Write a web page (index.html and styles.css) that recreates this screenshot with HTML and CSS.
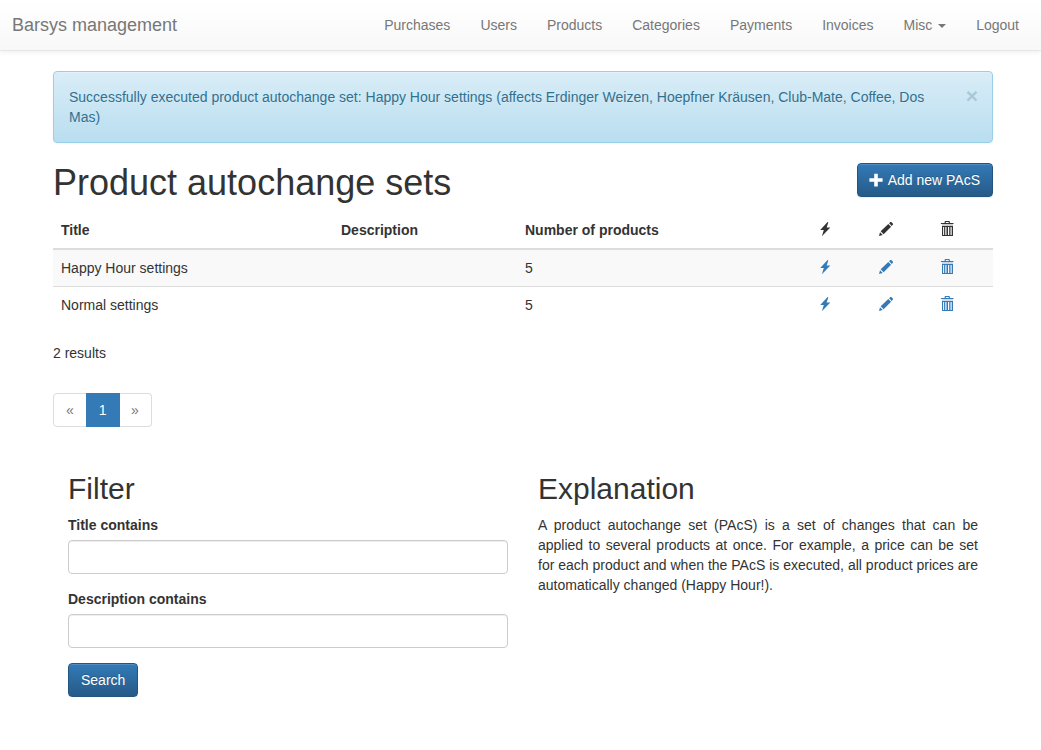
FILE: index.html
```html
<!DOCTYPE html>
<html lang="en">
<head>
<meta charset="utf-8">
<title>Barsys management</title>
<link rel="stylesheet" href="styles.css">
</head>
<body>
<svg class="defs" width="0" height="0" aria-hidden="true">
  <symbol id="bolt" viewBox="0 0 14 16"><path d="M9.6 1 2.2 9.1H5.8L3.9 15.3 12.3 6.6H8.6L10.3 1.4Z"/></symbol>
  <symbol id="pencil" viewBox="0 0 14 16"><path d="M0 15 1 11.2 3.7 14ZM1.7 10.3 9.3 2.9 12.1 5.7 4.6 13.3ZM10.1 2.2 11.3 1.1Q11.8.7 12.3 1.1L13.8 2.6Q14.2 3.2 13.8 3.7L12.8 4.9Z"/></symbol>
  <symbol id="trash" viewBox="0 0 14 16"><path fill-rule="evenodd" d="M4.6 2V1Q4.6 0 5.6 0H8.9Q9.9 0 9.9 1V2H13.1Q13.6 2 13.6 3V3.1H.8V3Q.8 2 1.3 2ZM5.8 2H8.7V1H5.8ZM2 5H13V14.4Q13 15 12.1 15H2.9Q2 15 2 14.4ZM3.1 6V14H4.1V6ZM5.3 6V14H6.5V6ZM8 6V14H9.2V6ZM10.5 6V14H11.7V6Z"/><path opacity=".25" d="M2 3H13V5H2Z"/></symbol>
</svg>
<nav class="navbar">
  <a class="brand">Barsys management</a>
  <ul class="nav">
    <li>Purchases</li><li>Users</li><li>Products</li><li>Categories</li><li>Payments</li><li>Invoices</li><li>Misc <span class="caret"></span></li><li>Logout</li>
  </ul>
</nav>
<main class="container">
  <div class="alert">
    <span>Successfully executed product autochange set: Happy Hour settings (affects Erdinger Weizen, Hoepfner Kräusen, Club-Mate, Coffee, Dos Mas)</span>
    <button class="close" type="button">×</button>
  </div>
  <header class="heading">
    <h1>Product autochange sets</h1>
    <a class="btn"><svg class="plus" viewBox="0 0 14 14"><path d="M5.2.8H8.8V5.2H13.6V8.8H8.8V13.4H5.2V8.8H.4V5.2H5.2Z"/></svg> Add new PAcS</a>
  </header>
  <table class="table">
    <colgroup><col class="col-title"><col class="col-desc"><col class="col-num"><col class="col-icon"><col class="col-icon"><col class="col-icon"></colgroup>
    <thead><tr><th>Title</th><th>Description</th><th>Number of products</th><th><svg class="icon"><use href="#bolt"/></svg></th><th><svg class="icon"><use href="#pencil"/></svg></th><th><svg class="icon"><use href="#trash"/></svg></th></tr></thead>
    <tbody>
      <tr><td>Happy Hour settings</td><td></td><td>5</td><td><svg class="icon"><use href="#bolt"/></svg></td><td><svg class="icon"><use href="#pencil"/></svg></td><td><svg class="icon"><use href="#trash"/></svg></td></tr>
      <tr><td>Normal settings</td><td></td><td>5</td><td><svg class="icon"><use href="#bolt"/></svg></td><td><svg class="icon"><use href="#pencil"/></svg></td><td><svg class="icon"><use href="#trash"/></svg></td></tr>
    </tbody>
  </table>
  <p class="results">2 results</p>
  <ul class="pagination"><li>«</li><li class="active">1</li><li>»</li></ul>
  <div class="row">
    <form class="column">
      <h2>Filter</h2>
      <label for="title">Title contains</label>
      <input id="title" type="text">
      <label for="desc">Description contains</label>
      <input id="desc" type="text">
      <button class="btn" type="button">Search</button>
    </form>
    <section class="column">
      <h2>Explanation</h2>
      <p class="explain">A product autochange set (PAcS) is a set of changes that can be applied to several products at once. For example, a price can be set for each product and when the PAcS is executed, all product prices are automatically changed (Happy Hour!).</p>
    </section>
  </div>
</main>
</body>
</html>
```
FILE: styles.css
```css
* { box-sizing: border-box; }
body {
  margin: 0;
  font: 14px/20px "Liberation Sans", Arial, sans-serif;
  color: #333;
  background: #fff;
}
.defs { display: none; }
.navbar {
  display: flex;
  justify-content: space-between;
  height: 51px;
  padding: 0 7px 0 12px;
  background: linear-gradient(#fff, #f8f8f8);
  border-bottom: 1px solid #e7e7e7;
  box-shadow: inset 0 1px 0 rgba(255,255,255,.15), 0 1px 5px rgba(0,0,0,.075);
  color: #777;
  text-shadow: 0 1px 0 rgba(255,255,255,.25);
}
.brand { padding: 15px 0; font-size: 18px; }
.nav { display: flex; margin: 0; padding: 0; list-style: none; }
.nav li { padding: 15px; }
.caret {
  display: inline-block;
  margin-left: 2px;
  vertical-align: middle;
  border-top: 4px solid;
  border-right: 4px solid transparent;
  border-left: 4px solid transparent;
}
.container { width: 940px; margin: 20px 0 0 53px; }
.alert {
  display: flex;
  justify-content: space-between;
  padding: 15px 14px 15px 15px;
  margin-bottom: 20px;
  color: #31708f;
  background: linear-gradient(#d9edf7, #b9def0);
  border: 1px solid #9acfea;
  border-radius: 4px;
  text-shadow: 0 1px 0 rgba(255,255,255,.2);
  box-shadow: inset 0 1px 0 rgba(255,255,255,.25), 0 1px 2px rgba(0,0,0,.05);
}
.alert span { width: 870px; }
.close {
  align-self: flex-start;
  margin-top: -2px;
  padding: 0;
  border: 0;
  background: none;
  font: bold 21px/21px "Liberation Sans", Arial, sans-serif;
  color: #31708f;
  opacity: .25;
}
.heading { display: flex; justify-content: space-between; align-items: flex-start; height: 49px; }
h1, h2 { margin: 0; font-weight: 500; line-height: 1.1; }
h1 { font-size: 36px; }
h2 { font-size: 30px; margin-bottom: 10px; }
.btn {
  display: inline-block;
  height: 34px;
  padding: 6px 12px;
  border: 1px solid #245580;
  border-radius: 4px;
  background: linear-gradient(#337ab7, #265a88);
  color: #fff;
  font: 14px/20px "Liberation Sans", Arial, sans-serif;
  text-shadow: 0 -1px 0 rgba(0,0,0,.2);
  box-shadow: inset 0 1px 0 rgba(255,255,255,.15), 0 1px 1px rgba(0,0,0,.075);
}
.heading .btn { padding: 6px 12px 6px 11px; }
.plus { width: 14px; height: 14px; margin-right: 1.5px; vertical-align: -2px; fill: currentColor; }
.table { width: 100%; margin-bottom: 19px; table-layout: fixed; border-collapse: collapse; }
.col-title { width: 280px; }
.col-desc { width: 184px; }
.col-num { width: 293px; }
.col-icon { width: 61px; }
th, td { height: 37px; padding: 8px; text-align: left; vertical-align: top; }
th { border-bottom: 2px solid #ddd; }
td { border-top: 1px solid #ddd; }
tbody tr:first-child { background: #f9f9f9; }
.icon { display: block; width: 14px; height: 16px; margin-top: 1px; fill: currentColor; }
td .icon { color: #337ab7; }
.results { margin: 0 0 30px; }
.pagination { display: flex; margin: 0 0 45px; padding: 0; list-style: none; }
.pagination li {
  height: 34px;
  padding: 6px 12px;
  margin-left: -1px;
  border: 1px solid #ddd;
  color: #777;
}
.pagination li:first-child { margin-left: 0; border-radius: 4px 0 0 4px; }
.pagination li:last-child { border-left: 0; margin-left: 0; padding: 6px 12px 6px 11.4px; border-radius: 0 4px 4px 0; }
.pagination .active { padding: 6px 12px; background: #337ab7; border-color: #337ab7; color: #fff; }
.row { display: grid; grid-template-columns: 1fr 1fr; }
.column { padding: 0 15px; }
label { display: block; margin-bottom: 5px; font-weight: bold; }
input {
  display: block;
  width: 100%;
  height: 34px;
  margin-bottom: 15px;
  border: 1px solid #ccc;
  border-radius: 4px;
  background: #fff;
  box-shadow: inset 0 1px 1px rgba(0,0,0,.075);
}
.explain { margin: 0; text-align: justify; }
```
